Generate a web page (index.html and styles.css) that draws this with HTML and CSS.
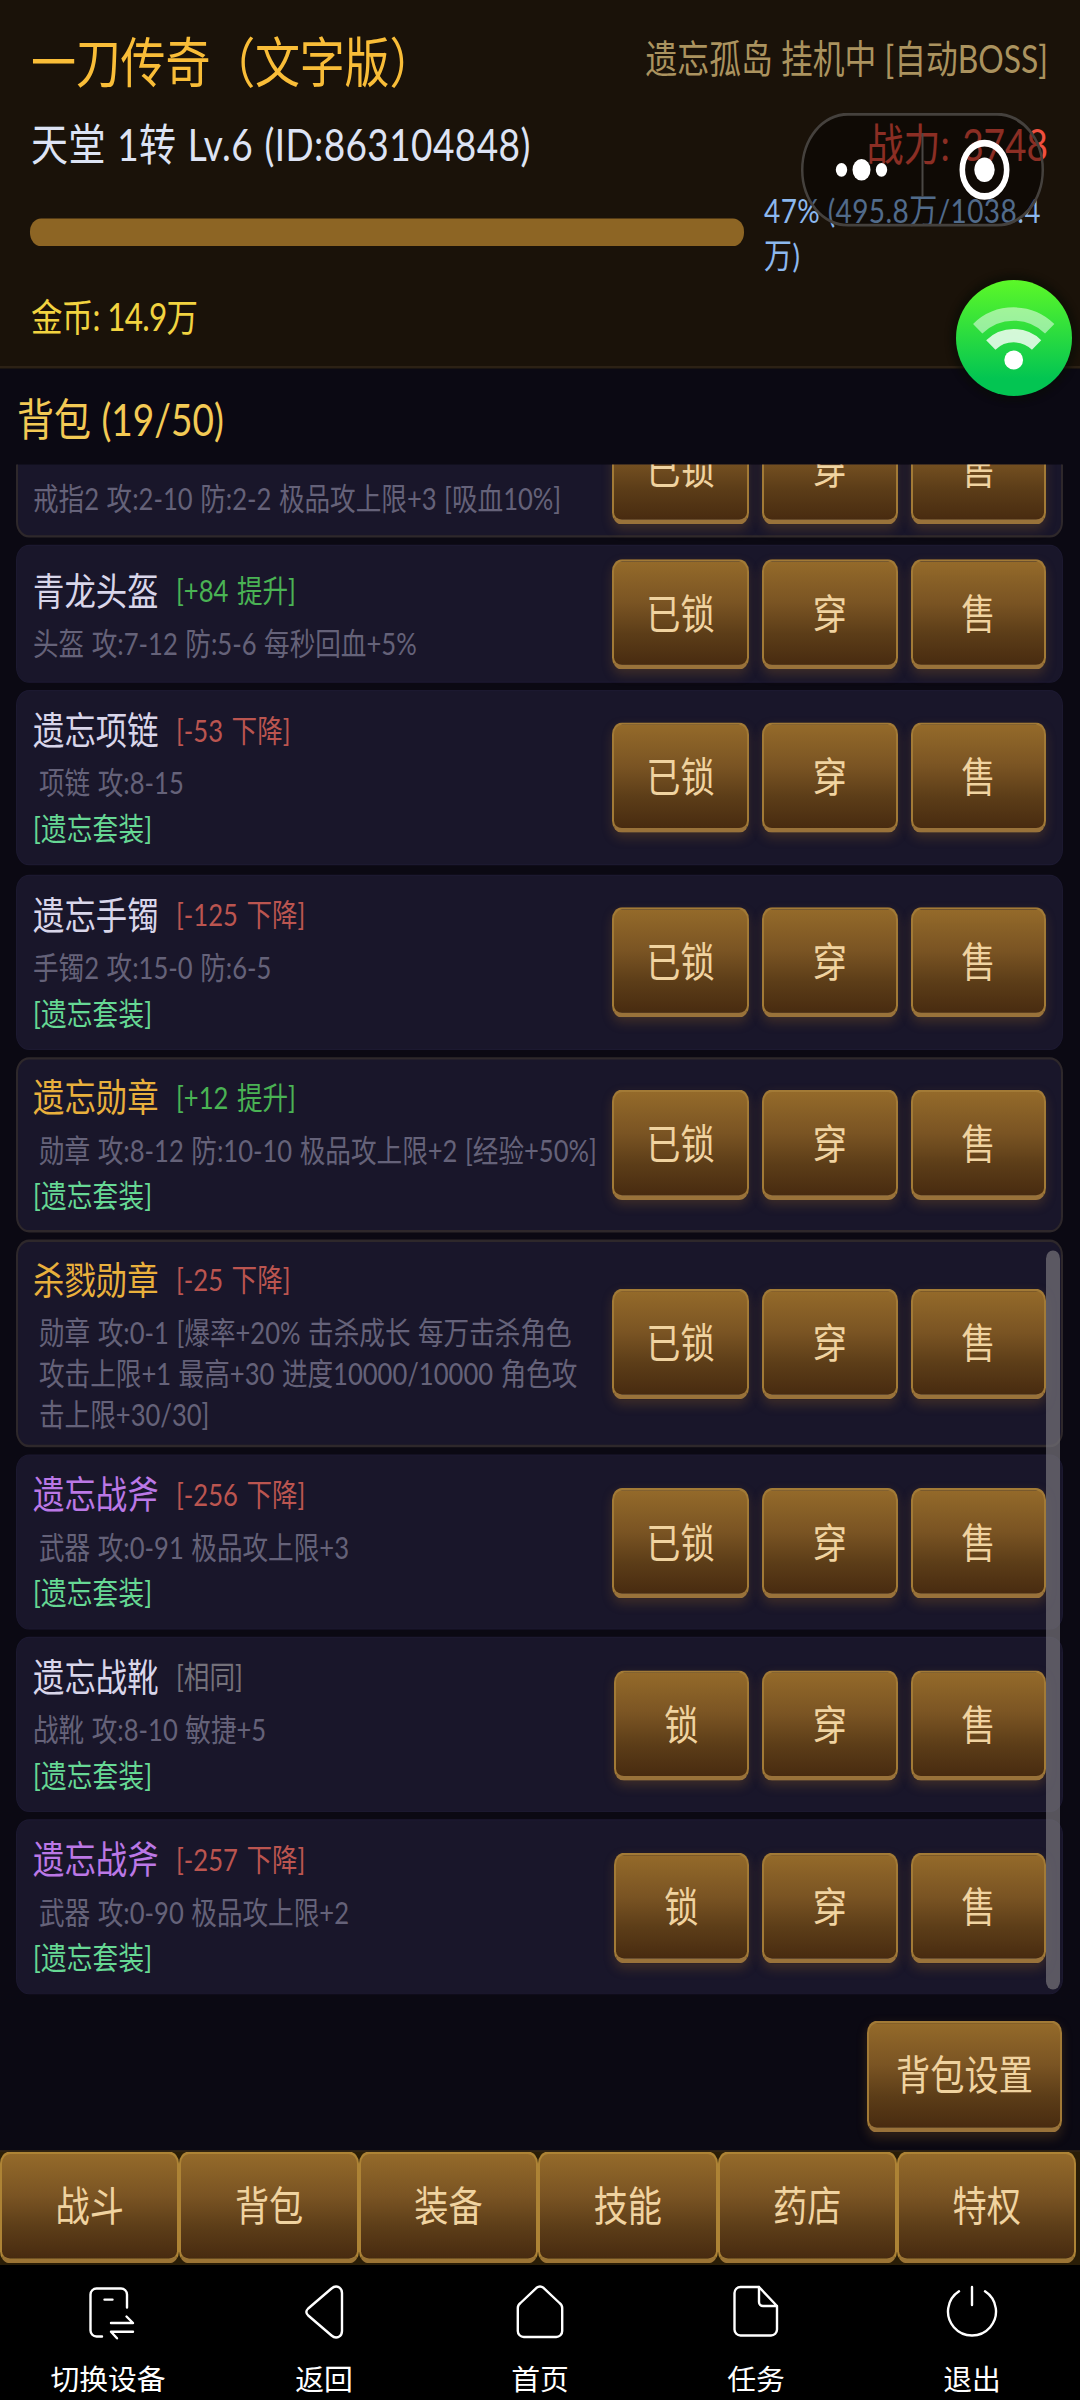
FILE: index.html
```html
<!DOCTYPE html>
<html lang="zh-CN">
<head>
<meta charset="utf-8">
<title>一刀传奇（文字版）</title>
<link rel="stylesheet" href="styles.css">
</head>
<body>
<div class="viewport">
  <div class="game">
    <header class="header">
      <div class="row row-title">
        <h1 class="title">一刀传奇（文字版）</h1>
        <span class="status">遗忘孤岛 挂机中 [自动BOSS]</span>
      </div>
      <div class="row row-player">
        <span class="player">天堂 1转 Lv.6 (ID:863104848)</span>
        <span class="power">战力: 3748</span>
      </div>
      <div class="row row-exp">
        <div class="bar"></div>
        <div class="exp">47% (495.8万/1038.4<br>万)</div>
      </div>
      <div class="row row-gold">金币: 14.9万</div>
      <div class="capsule">
        <svg width="243" height="95" viewBox="0 0 243 95">
          <line x1="121.5" y1="17" x2="121.5" y2="70" stroke="#4a4744" stroke-width="2"/>
          <g fill="#fff">
            <circle cx="40.5" cy="47.5" r="5.7"/>
            <circle cx="60.5" cy="47.5" r="9"/>
            <circle cx="80.5" cy="47.5" r="5.7"/>
            <circle cx="183.5" cy="47.5" r="10.2"/>
          </g>
          <circle cx="183.5" cy="47.5" r="22.2" fill="none" stroke="#fff" stroke-width="5.6"/>
        </svg>
      </div>
    </header>

    <main class="bag">
      <h2 class="bag-title">背包 (19/50)</h2>
      <div class="list">
        <article class="item gold">
          <div class="info"><div class="head"></div><div class="desc">戒指2 攻:2-10 防:2-2 极品攻上限+3 [吸血10%]</div></div>
          <div class="acts"><button class="btn wide">已锁</button><button class="btn">穿</button><button class="btn">售</button></div>
        </article>
        <article class="item">
          <div class="info"><div class="head"><span class="name">青龙头盔</span><span class="tag up">[+84 提升]</span></div><div class="desc">头盔 攻:7-12 防:5-6 每秒回血+5%</div></div>
          <div class="acts"><button class="btn wide">已锁</button><button class="btn">穿</button><button class="btn">售</button></div>
        </article>
        <article class="item spaced">
          <div class="info"><div class="head"><span class="name">遗忘项链</span><span class="tag down">[-53 下降]</span></div><div class="desc indent">项链 攻:8-15</div><div class="set">[遗忘套装]</div></div>
          <div class="acts"><button class="btn wide">已锁</button><button class="btn">穿</button><button class="btn">售</button></div>
        </article>
        <article class="item">
          <div class="info"><div class="head"><span class="name">遗忘手镯</span><span class="tag down">[-125 下降]</span></div><div class="desc">手镯2 攻:15-0 防:6-5</div><div class="set">[遗忘套装]</div></div>
          <div class="acts"><button class="btn wide">已锁</button><button class="btn">穿</button><button class="btn">售</button></div>
        </article>
        <article class="item gold">
          <div class="info"><div class="head"><span class="name">遗忘勋章</span><span class="tag up">[+12 提升]</span></div><div class="desc indent">勋章 攻:8-12 防:10-10 极品攻上限+2 [经验+50%]</div><div class="set">[遗忘套装]</div></div>
          <div class="acts"><button class="btn wide">已锁</button><button class="btn">穿</button><button class="btn">售</button></div>
        </article>
        <article class="item gold">
          <div class="info"><div class="head"><span class="name">杀戮勋章</span><span class="tag down">[-25 下降]</span></div><div class="desc indent">勋章 攻:0-1 [爆率+20% 击杀成长 每万击杀角色<br>攻击上限+1 最高+30 进度10000/10000 角色攻<br>击上限+30/30]</div></div>
          <div class="acts"><button class="btn wide">已锁</button><button class="btn">穿</button><button class="btn">售</button></div>
        </article>
        <article class="item epic">
          <div class="info"><div class="head"><span class="name">遗忘战斧</span><span class="tag down">[-256 下降]</span></div><div class="desc indent">武器 攻:0-91 极品攻上限+3</div><div class="set">[遗忘套装]</div></div>
          <div class="acts"><button class="btn wide">已锁</button><button class="btn">穿</button><button class="btn">售</button></div>
        </article>
        <article class="item">
          <div class="info"><div class="head"><span class="name">遗忘战靴</span><span class="tag same">[相同]</span></div><div class="desc">战靴 攻:8-10 敏捷+5</div><div class="set">[遗忘套装]</div></div>
          <div class="acts"><button class="btn">锁</button><button class="btn">穿</button><button class="btn">售</button></div>
        </article>
        <article class="item epic">
          <div class="info"><div class="head"><span class="name">遗忘战斧</span><span class="tag down">[-257 下降]</span></div><div class="desc indent">武器 攻:0-90 极品攻上限+2</div><div class="set">[遗忘套装]</div></div>
          <div class="acts"><button class="btn">锁</button><button class="btn">穿</button><button class="btn">售</button></div>
        </article>
        <div class="scrollbar"></div>
      </div>
      <div class="tools"><button class="btn settings">背包设置</button></div>
    </main>

    <nav class="tabs">
      <button class="btn tab">战斗</button>
      <button class="btn tab">背包</button>
      <button class="btn tab">装备</button>
      <button class="btn tab">技能</button>
      <button class="btn tab">药店</button>
      <button class="btn tab">特权</button>
    </nav>
  </div>
</div>

<div class="float-ball">
  <svg width="116" height="116" viewBox="-58 -58 116 116" fill="none" stroke="#fff" stroke-width="13.3" stroke-linejoin="round">
    <path d="M-36.3 -9.3A51.4 51.4 0 0 1 35.7 -9.3" stroke-opacity=".5"/>
    <path d="M-23.2 7A32.8 32.8 0 0 1 22.6 7" stroke-opacity=".8"/>
    <circle cx="-.3" cy="22" r="9.4" fill="#fff" stroke="none"/>
  </svg>
</div>

<footer class="system">
  <div class="sys"><svg class="ico" viewBox="0 0 60 60"><path d="M49 25.5V12.500a6 6 0 0 0-6-6H18.500a6 6 0 0 0-6 6V48.500a6 6 0 0 0 6 6H24M26.500 17.600H34.500M33 41H55L48.500 34.500M55 49.800H33L39 56.300"/></svg><span>切换设备</span></div>
  <div class="sys"><svg class="ico" viewBox="0 0 60 60"><path d="M14.200 26.500L37.500 6.500Q41 3.500 44.800 5.200Q48 6.800 48 11V49Q48 53.200 44.800 54.800Q41 56.500 37.500 53.500L14.200 33.500Q10.500 30 14.200 26.500Z"/></svg><span>返回</span></div>
  <div class="sys"><svg class="ico" viewBox="0 0 60 60"><path d="M7.800 26Q7.800 23 10.500 21L26.500 5.800Q30 3.200 33.500 5.800L49.500 21Q52.200 23 52.200 26V49a6 6 0 0 1-6 6H13.800a6 6 0 0 1-6-6Z"/></svg><span>首页</span></div>
  <div class="sys"><svg class="ico" viewBox="0 0 60 60"><path d="M33 5H14.500a6 6 0 0 0-6 6V47.500a6 6 0 0 0 6 6H45a6 6 0 0 0 6-6V24L33 5V20a4 4 0 0 0 4 4H51"/></svg><span>任务</span></div>
  <div class="sys"><svg class="ico" viewBox="0 0 60 60"><path d="M17 9.300A24 24 0 1 0 43 9.300M30 5V23"/></svg><span>退出</span></div>
</footer>
</body>
</html>
```
FILE: styles.css
```css
* { box-sizing: border-box; }
body {
  margin: 0;
  width: 1080px;
  height: 2400px;
  overflow: hidden;
  position: relative;
  background: #000;
  font-family: Lato, "Noto Sans CJK SC", sans-serif;
  white-space: nowrap;
}
h1, h2 { margin: 0; font-weight: 400; }

/* The game canvas is stretched vertically to fill the device screen */
.viewport { height: 2265px; overflow: hidden; }
.game {
  width: 1080px;
  height: 1887.5px;
  transform: scaleY(1.2);
  transform-origin: 0 0;
  display: flex;
  flex-direction: column;
  background: #0b0913;
}

.header {
  position: relative;
  height: 306.700px;
  padding: 22px 32px 0 30px;
  background: #1a1209;
  border-bottom: 2px solid #2c2115;
}
.row { display: flex; align-items: center; justify-content: space-between; }
.row-title { height: 55px; }
.title { font-size: 45px; letter-spacing: -.2px; color: #f9bd38; padding-left: 1px; }
.status { font-size: 31.800px; line-height: 40px; padding-bottom: 1.500px; color: #ab935f; }
.row-player { height: 50px; margin-top: 16px; font-size: 37px; }
.player { padding-left: 1px; letter-spacing: .400px; word-spacing: 1.500px; color: #dde3f4; }
.power { word-spacing: 3px; color: #f0503f; }
.row-exp { height: 74px; margin-top: 13.500px; justify-content: flex-start; }
.bar { width: 714px; height: 23px; border-radius: 11px; background: #8d6524; }
.exp { margin-left: 20px; font-size: 28px; line-height: 36.800px; letter-spacing: .400px; color: #8cb8ee; }
.row-gold { height: 46px; margin-top: 8px; padding-left: 1px; justify-content: flex-start; font-size: 31.500px; letter-spacing: -.700px; color: #f2d340; }

.capsule {
  position: absolute;
  left: 801px;
  top: 94.200px;
  width: 243px;
  height: 95px;
  border-radius: 47px;
  background: rgba(0, 0, 0, .42);
  box-shadow: inset 0 0 0 2.500px #45413d;
}
.capsule svg { display: block; }

.bag { flex: 1; padding: 0 17px 0 16px; }
.bag-title { height: 80.800px; line-height: 83px; padding-left: 1px; font-size: 37px; word-spacing: 1px; color: #f3ca55; }
.list {
  position: relative;
  height: 1274.600px;
  overflow: hidden;
  display: flex;
  flex-direction: column;
  justify-content: flex-end;
  gap: 6.200px;
}
.item {
  flex: none;
  display: flex;
  align-items: center;
  justify-content: space-between;
  min-height: 115px;
  padding: 10.200px 16px 9.300px 16px;
  border: 1px solid #1c1930;
  border-radius: 13px;
  background: #19162a;
}
.item.gold { border: 2px solid #2e282b; padding: 9.200px 15px 8.300px 15px; }
.item.spaced { margin-bottom: 2px; }
.head { display: flex; align-items: center; height: 40.600px; margin-bottom: 9.400px; }
.name { font-size: 31.400px; color: #d9d6ea; width: 143px; }
.gold .name { color: #e9b03c; }
.epic .name { color: #bb78e6; }
.tag { font-size: 25.600px; word-spacing: 2px; }
.up { color: #4ab354; }
.down { color: #bb5550; }
.same { color: #74717a; }
.desc { font-size: 25.600px; line-height: 33.800px; word-spacing: 1px; color: #656279; }
.indent { padding-left: 6px; }
.set { margin-top: 1.200px; font-size: 25.600px; line-height: 39.400px; letter-spacing: .200px; color: #66d894; }

.acts { display: flex; gap: 13px; margin-left: -20px; }
.btn {
  flex: none;
  width: 135.500px;
  height: 92px;
  padding: 0;
  border: 2px solid #a27a36;
  border-bottom: 4px solid #99723a;
  border-radius: 10px;
  background: linear-gradient(#946a2a, #7a5423 40%, #5c3d18 70%, #482b10);
  box-shadow: 0 4px 10px rgba(150, 100, 40, .28);
  font-family: inherit;
  font-size: 34.200px;
  line-height: 84px;
  color: #f0d3a0;
}
.btn.wide { width: 137px; }
.scrollbar {
  position: absolute;
  left: 1030px;
  top: 654.200px;
  width: 13.500px;
  height: 616px;
  border-radius: 7px;
  background: rgba(116, 114, 120, .72);
}
.tools { display: flex; justify-content: flex-end; padding: 21.800px 1px 0 0; }
.btn.settings { width: 195px; height: 93px; }

.tabs {
  display: flex;
  height: 95.800px;
  background: #291d07;
  border-top: 1.500px solid #33271a;
}
.btn.tab { width: 179.400px; height: 93px; border-color: #ad8335; border-bottom-color: #9b7435; box-shadow: none; }

.float-ball {
  position: absolute;
  left: 956px;
  top: 280px;
  width: 116px;
  height: 116px;
  border-radius: 50%;
  background: linear-gradient(#5cf828, #03c552 85%);
  box-shadow: 0 0 5px 6px rgba(10, 12, 5, .5);
}
.float-ball svg { display: block; }

.system { display: flex; height: 135px; background: #000; color: #fff; }
.sys { width: 216px; display: flex; flex-direction: column; align-items: center; padding-top: 16.700px; font-size: 28.800px; line-height: 42px; }
.sys span { margin-top: 16px; }
.ico { width: 60px; height: 60px; fill: none; stroke: #fff; stroke-width: 2.400; stroke-linecap: round; stroke-linejoin: round; }
```
